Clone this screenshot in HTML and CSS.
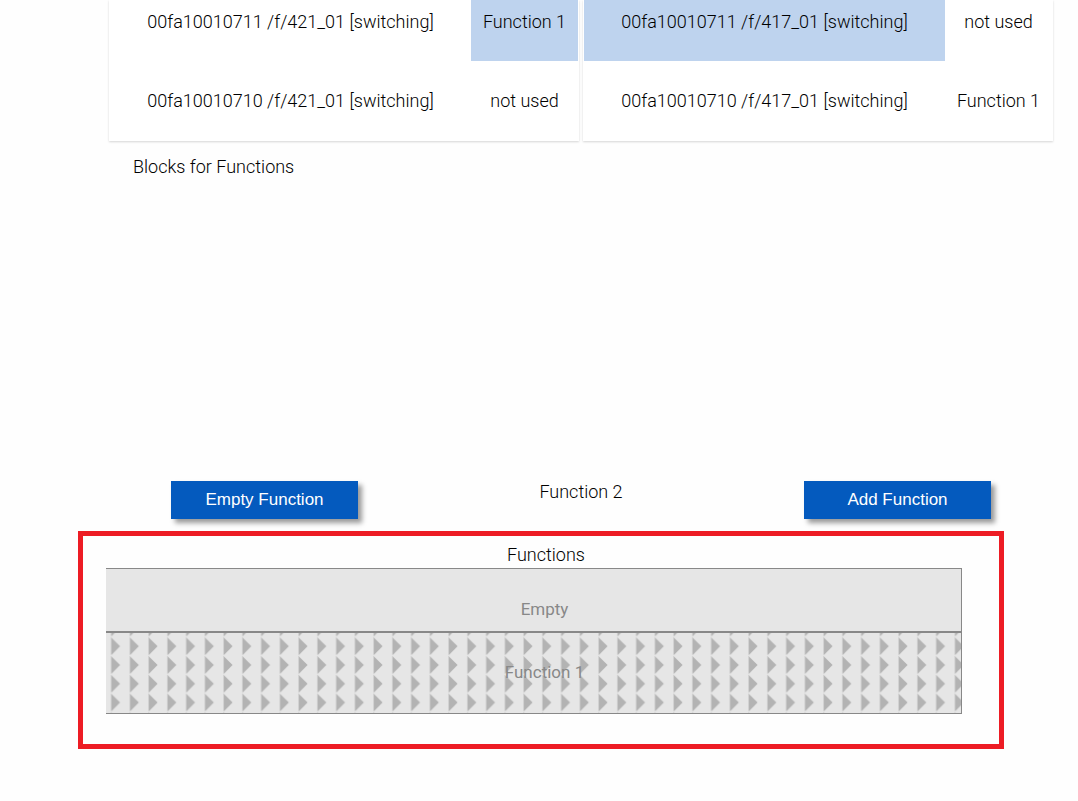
FILE: index.html
```html
<!DOCTYPE html>
<html lang="en">
<head>
<meta charset="utf-8">
<title>Functions</title>
<link rel="stylesheet" href="styles.css">
</head>
<body>
<main class="page">
  <div class="assignments">
    <table class="card">
      <tr><td class="address">00fa10010711 /f/421_01 [switching]</td><td class="usage selected">Function 1</td></tr>
      <tr><td class="address">00fa10010710 /f/421_01 [switching]</td><td class="usage">not used</td></tr>
    </table>
    <table class="card">
      <tr><td class="address selected">00fa10010711 /f/417_01 [switching]</td><td class="usage">not used</td></tr>
      <tr><td class="address">00fa10010710 /f/417_01 [switching]</td><td class="usage">Function 1</td></tr>
    </table>
  </div>
  <section class="blocks">
    <h2 class="blocks-title">Blocks for Functions</h2>
  </section>
  <div class="actions">
    <button type="button" class="button">Empty Function</button>
    <span class="current">Function 2</span>
    <button type="button" class="button">Add Function</button>
  </div>
  <section class="functions">
    <h2 class="functions-title">Functions</h2>
    <ul class="function-list">
      <li class="function empty">Empty</li>
      <li class="function used">
        <svg class="arrows" width="100%" height="100%" aria-hidden="true">
          <defs>
            <pattern id="arrows" x="4.6" y="-14.4" width="18.75" height="18.75" patternUnits="userSpaceOnUse">
              <path d="M0 0H1V17.5H0Z" fill="#d0d0d0"/>
              <path d="M1 .5L9.5 9L1 17.5Z" fill="#b3b3b3"/>
            </pattern>
          </defs>
          <rect width="100%" height="100%" fill="url(#arrows)"/>
        </svg>
        <span class="function-name">Function 1</span>
      </li>
    </ul>
  </section>
</main>
</body>
</html>
```
FILE: styles.css
```css
* { box-sizing: border-box; }

body {
  margin: 0;
  background: #fefefe;
  color: #000;
  font: 300 18px/24px Roboto, sans-serif;
}

h2 {
  margin: 0;
  font-size: 18px;
  font-weight: 300;
}

.page { padding-bottom: 52px; }

.assignments {
  display: flex;
  gap: 4px;
  padding: 0 25px 0 109px;
}

.card {
  flex: 1;
  border-collapse: separate;
  border-spacing: 0;
  table-layout: fixed;
  width: 0;
  border: solid #fff;
  border-width: 0 1px;
  background: #fff;
  box-shadow: 0 1px 2px rgba(0, 0, 0, 0.16);
}

.card td {
  height: 80px;
  padding: 0;
  text-align: center;
}

.card tr:first-child td {
  height: 61px;
  padding-bottom: 18px;
}

.card .usage { width: 107px; }

.selected { background: #bed3ee; }

.blocks {
  min-height: 340px;
  padding: 14px 25px 0 133px;
}

.actions {
  display: flex;
  justify-content: space-between;
  align-items: flex-start;
  padding: 0 87px 0 171px;
}

.button {
  width: 187px;
  height: 38px;
  padding: 0;
  border: 0;
  background: #045abe;
  color: #fff;
  font: 17px/20px "Liberation Sans", Arial, sans-serif;
  box-shadow: 4px 4px 5px rgba(0, 0, 0, 0.4);
}

.current { line-height: 22px; }

.functions {
  margin: 12px 74px 0 78px;
  padding: 6px 37px 30px 23px;
  border: 5px solid #ed1c24;
}

.functions-title {
  padding-left: 24px;
  line-height: 26px;
  text-align: center;
}

.function-list {
  margin: 0;
  padding: 0;
  list-style: none;
  border: solid #888;
  border-width: 1px 1px 1px 0;
  background: #e6e6e6;
  color: #888;
  font-size: 17px;
  font-weight: 400;
  text-align: center;
}

.function {
  position: relative;
  padding: 28px 0 10px 22px;
}

.empty {
  border-bottom: 2px solid #888;
}

.used { padding: 27px 0 29px 22px; }

.arrows {
  position: absolute;
  inset: 0;
}

.function-name { position: relative; }
```
